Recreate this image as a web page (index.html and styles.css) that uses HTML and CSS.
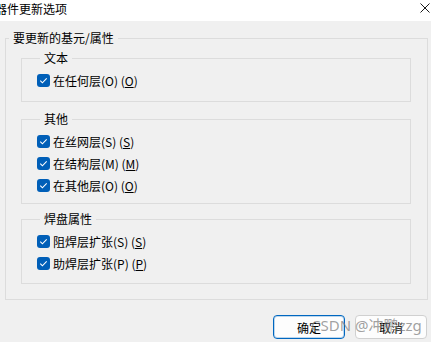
FILE: index.html
```html
<!DOCTYPE html>
<html lang="zh">
<head>
    <meta charset="UTF-8">
    <title>器件更新选项</title>
    <link rel="stylesheet" href="styles.css">
</head>
<body>
    <div class="titlebar">
        <span class="title">器件更新选项</span>
        <svg class="close" width="10" height="10" viewBox="0 0 10 10">
            <path d="M0.5 0.5 L9.5 9.5 M9.5 0.5 L0.5 9.5" stroke="#1a1a1a" stroke-width="1" fill="none"/>
        </svg>
    </div>

    <div class="dialog">
        <fieldset class="outer">
            <legend>要更新的基元/属性</legend>

            <fieldset class="group group-text">
                <legend>文本</legend>
                <label class="check"><span class="box"><svg width="13" height="13" viewBox="0 0 13 13"><path d="M3.3 6.7 L5.4 8.8 L9.7 4.4" stroke="#fff" stroke-width="1.1" fill="none"/></svg></span><span>在任何层(O) (<u>O</u>)</span></label>
            </fieldset>

            <fieldset class="group group-other">
                <legend>其他</legend>
                <label class="check"><span class="box"><svg width="13" height="13" viewBox="0 0 13 13"><path d="M3.3 6.7 L5.4 8.8 L9.7 4.4" stroke="#fff" stroke-width="1.1" fill="none"/></svg></span><span>在丝网层(S) (<u>S</u>)</span></label>
                <label class="check"><span class="box"><svg width="13" height="13" viewBox="0 0 13 13"><path d="M3.3 6.7 L5.4 8.8 L9.7 4.4" stroke="#fff" stroke-width="1.1" fill="none"/></svg></span><span>在结构层(M) (<u>M</u>)</span></label>
                <label class="check"><span class="box"><svg width="13" height="13" viewBox="0 0 13 13"><path d="M3.3 6.7 L5.4 8.8 L9.7 4.4" stroke="#fff" stroke-width="1.1" fill="none"/></svg></span><span>在其他层(O) (<u>O</u>)</span></label>
            </fieldset>

            <fieldset class="group group-pad">
                <legend>焊盘属性</legend>
                <label class="check"><span class="box"><svg width="13" height="13" viewBox="0 0 13 13"><path d="M3.3 6.7 L5.4 8.8 L9.7 4.4" stroke="#fff" stroke-width="1.1" fill="none"/></svg></span><span>阻焊层扩张(S) (<u>S</u>)</span></label>
                <label class="check"><span class="box"><svg width="13" height="13" viewBox="0 0 13 13"><path d="M3.3 6.7 L5.4 8.8 L9.7 4.4" stroke="#fff" stroke-width="1.1" fill="none"/></svg></span><span>助焊层扩张(P) (<u>P</u>)</span></label>
            </fieldset>
        </fieldset>

        <div class="buttons">
            <button class="btn btn-default">确定</button>
            <button class="btn">取消</button>
        </div>
    </div>

    <div class="watermark">CSDN @冲鹏zzg</div>
</body>
</html>
```

FILE: styles.css
```css
body {
    margin: 0;
    padding: 0;
    width: 431px;
    height: 342px;
    overflow: hidden;
    position: relative;
    background-color: #f0f0f0;
    font-family: "Noto Sans CJK SC", "Noto Sans", sans-serif;
    font-size: 12px;
    color: #000;
}

/* 标题栏 */
.titlebar {
    height: 21px;
    background-color: #fff;
    display: flex;
    justify-content: space-between;
    align-items: flex-start;
}

.title {
    margin-left: -5px;
    line-height: 18px;
}

.close {
    margin-top: 3px;
    margin-right: 1px;
}

/* 分组框 */
.dialog {
    padding-top: 9px;
}

fieldset {
    margin: 0;
    min-width: 0;
    border: 1px solid #dcdcdc;
}

legend {
    margin-left: 3px;
    padding: 0 4px;
    line-height: 16px;
}

.outer {
    margin: 0 3px 0 5px;
    padding: 0 0 15px;
}

.group {
    margin: 9px 16px 0 15px;
    padding: 3px 15px 9px;
    display: flex;
    flex-direction: column;
}

.group-text {
    margin-top: 4px;
    padding-bottom: 10px;
}

.group-other {
    padding-bottom: 7px;
}

.group-pad {
    margin-top: 7px;
}

.check {
    height: 22px;
    display: flex;
    align-items: center;
    gap: 3px;
}

.box {
    width: 13px;
    height: 13px;
    border-radius: 3px;
    background-color: #005fb8;
    display: flex;
}

.check u {
    text-underline-offset: 1px;
}

/* 按钮 */
.buttons {
    margin-top: 15px;
    padding-right: 4px;
    display: flex;
    justify-content: flex-end;
    gap: 10px;
}

.btn {
    width: 72px;
    height: 24px;
    padding: 0;
    border: 1px solid #d0d0d0;
    border-radius: 4px;
    background-color: #fdfdfd;
    font-family: inherit;
    font-size: 12px;
    color: #000;
}

.btn-default {
    border-color: #0067c0;
    box-shadow: inset 0 0 0 1px rgba(0, 103, 192, 0.25);
}

/* 水印 */
.watermark {
    position: absolute;
    left: 311px;
    top: 315px;
    font-family: "Noto Sans", "Noto Sans CJK SC", sans-serif;
    font-size: 15px;
    line-height: 20px;
    color: rgba(120, 120, 120, 0.7);
    pointer-events: none;
}
```
